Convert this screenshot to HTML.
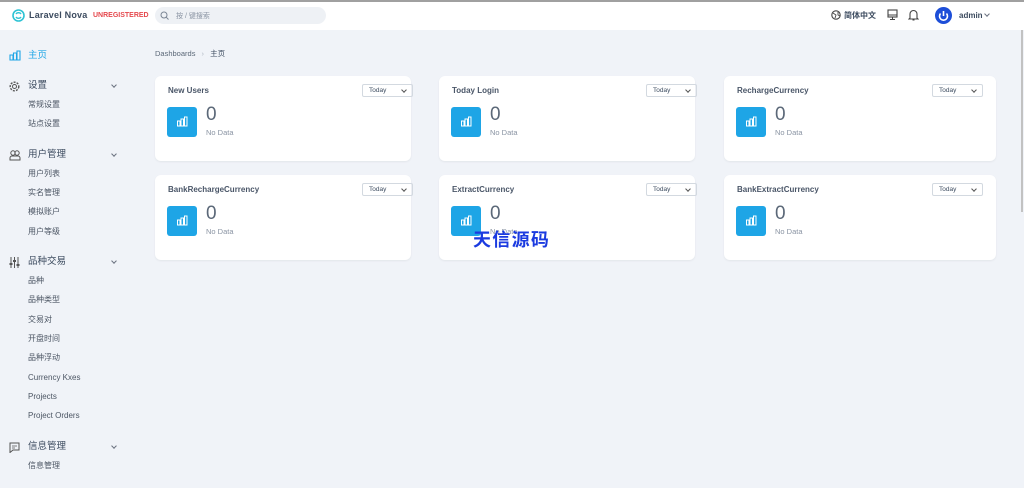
<!DOCTYPE html>
<html><head><meta charset="utf-8"><style>
*{box-sizing:border-box;margin:0;padding:0}
body{width:1024px;height:488px;overflow:hidden;background:#f0f3f8;font-family:"Liberation Sans","Noto Sans CJK SC",sans-serif;position:relative;color:#3c4b5f}
.top{position:absolute;left:0;top:0;width:1024px;height:2px;background:#a0a0a0}
.hdr{position:absolute;left:0;top:2px;width:1024px;height:28px;background:#fff}
.abs{position:absolute;white-space:nowrap}
.s{font-size:8px;color:#4b5563;line-height:1}
.sec{font-size:9.5px;color:#3c4b5f;line-height:1}
.card{position:absolute;background:#fff;border-radius:6px;box-shadow:0 1px 2px rgba(0,0,0,.06)}
.card .t{position:absolute;left:13px;top:10px;font-size:8px;font-weight:bold;color:#4a5668}
.card .sel{position:absolute;top:8px;width:51px;height:13px;border:1px solid #d3d9e0;border-radius:2px;font-size:6.5px;color:#3c4b5f;padding:2px 0 0 6px}
.card .sel:after{content:"";position:absolute;right:6px;top:3px;width:3px;height:3px;border-right:1px solid #555;border-bottom:1px solid #555;transform:rotate(45deg)}
.card .ic{position:absolute;left:12px;top:31px;width:30px;height:30px;background:#1ea5e6;border-radius:3px}
.card .n{position:absolute;left:51px;top:28px;font-size:19px;color:#5b6878}
.card .nd{position:absolute;left:51px;top:52px;font-size:7.5px;color:#8a94a3}
.chev{position:absolute;width:4px;height:4px;border-right:1px solid #6b7280;border-bottom:1px solid #6b7280;transform:rotate(45deg)}
</style></head><body>
<div class="top"></div>
<div class="hdr"></div>
<svg class="abs" style="left:12px;top:9px" width="13" height="13" viewBox="0 0 13 13"><circle cx="6.5" cy="6.5" r="5.5" fill="none" stroke="#2dc3d4" stroke-width="1.6"/><path d="M4 5a3 3 0 0 1 5 0M9 8a3 3 0 0 1-5 0" fill="none" stroke="#2dc3d4" stroke-width="1.4"/></svg>
<div class="abs" style="left:29px;top:10px;font-size:9px;font-weight:bold;color:#3c4b5f;letter-spacing:.2px">Laravel Nova</div>
<div class="abs" style="left:93px;top:12px;font-size:7px;font-weight:bold;color:#e5484d">UNREGISTERED</div>
<div class="abs" style="left:155px;top:7px;width:171px;height:17px;background:#eef1f5;border-radius:9px"></div>
<svg class="abs" style="left:160px;top:11px" width="9" height="9"><circle cx="4" cy="4" r="3" fill="none" stroke="#7a8594" stroke-width="1"/><path d="M6.2 6.2 8.5 8.5" stroke="#7a8594"/></svg>
<div class="abs" style="left:176px;top:11px;font-size:7px;color:#8a94a3">按 / 键搜索</div>
<svg class="abs" style="left:831px;top:10px" width="10" height="10"><circle cx="5" cy="5" r="4.2" fill="none" stroke="#444" stroke-width="1.1"/><path d="M2 3l3 2-1 3M7 2l0 3 2 1" fill="none" stroke="#444" stroke-width=".9"/></svg>
<div class="abs" style="left:844px;top:10px;font-size:8px;font-weight:bold;color:#3c4b5f">简体中文</div>
<svg class="abs" style="left:887px;top:9px" width="11" height="11"><rect x="1" y="1" width="9" height="7" fill="none" stroke="#444" stroke-width="1.1"/><path d="M1 6h9M5.5 8v2M3 10.5h5" stroke="#444"/></svg>
<svg class="abs" style="left:908px;top:9px" width="11" height="12"><path d="M2 9V5a3.5 3.5 0 0 1 7 0v4l1 1H1zM4.5 11h2" fill="none" stroke="#444" stroke-width="1.1"/></svg>
<div class="abs" style="left:935px;top:7px;width:17px;height:17px;border-radius:50%;background:#1d4ed8"></div>
<svg class="abs" style="left:935px;top:7px" width="17" height="17"><path d="M5.5 6.5a4 4 0 1 0 6 0" fill="none" stroke="#fff" stroke-width="1.6"/><path d="M8.5 4v5" stroke="#fff" stroke-width="1.6"/></svg>
<div class="abs" style="left:959px;top:11px;font-size:8px;font-weight:bold;color:#3c4b5f">admin</div>
<div class="chev" style="left:985px;top:12px"></div>
<div class="abs" style="left:1021px;top:30px;width:2px;height:182px;background:#c2c2c2"></div>

<svg class="abs" style="left:9px;top:50px" width="12" height="11"><path d="M1 5h3v5H1zM4.5 3h3v7h-3zM8 1h3v9H8z" fill="none" stroke="#1ea5e6" stroke-width="1.1"/></svg>
<div class="abs sec" style="left:28px;top:51px;color:#1ea5e6">主页</div>
<svg class="abs" style="left:9px;top:81px" width="11" height="11"><circle cx="5.5" cy="5.5" r="2" fill="none" stroke="#555"/><circle cx="5.5" cy="5.5" r="4.3" fill="none" stroke="#555" stroke-dasharray="2 1.2" stroke-width="1.4"/></svg>
<div class="abs sec" style="left:28px;top:81px">设置</div><div class="chev" style="left:112px;top:83px"></div>
<div class="abs s" style="left:28px;top:101px">常规设置</div>
<div class="abs s" style="left:28px;top:120px">站点设置</div>
<svg class="abs" style="left:9px;top:150px" width="12" height="11"><circle cx="4" cy="3" r="2.2" fill="none" stroke="#555"/><circle cx="8" cy="3" r="2.2" fill="none" stroke="#555"/><path d="M1 10V8a2 2 0 0 1 2-2h6a2 2 0 0 1 2 2v2z" fill="none" stroke="#555"/></svg>
<div class="abs sec" style="left:28px;top:150px">用户管理</div><div class="chev" style="left:112px;top:152px"></div>
<div class="abs s" style="left:28px;top:170px">用户列表</div>
<div class="abs s" style="left:28px;top:189px">实名管理</div>
<div class="abs s" style="left:28px;top:208px">模拟账户</div>
<div class="abs s" style="left:28px;top:228px">用户等级</div>
<svg class="abs" style="left:9px;top:257px" width="11" height="11"><path d="M2 0v11M5.5 0v11M9 0v11" stroke="#555"/><rect x="0.5" y="6" width="3" height="2" fill="#555"/><rect x="4" y="3" width="3" height="2" fill="#555"/><rect x="7.5" y="7" width="3" height="2" fill="#555"/></svg>
<div class="abs sec" style="left:28px;top:257px">品种交易</div><div class="chev" style="left:112px;top:259px"></div>
<div class="abs s" style="left:28px;top:277px">品种</div>
<div class="abs s" style="left:28px;top:296px">品种类型</div>
<div class="abs s" style="left:28px;top:316px">交易对</div>
<div class="abs s" style="left:28px;top:335px">开盘时间</div>
<div class="abs s" style="left:28px;top:354px">品种浮动</div>
<div class="abs s" style="left:28px;top:374px">Currency Kxes</div>
<div class="abs s" style="left:28px;top:393px">Projects</div>
<div class="abs s" style="left:28px;top:412px">Project Orders</div>
<svg class="abs" style="left:9px;top:442px" width="11" height="11"><path d="M1 1h9v7H4l-3 2.5z" fill="none" stroke="#555"/><path d="M3 4h5M3 6h3" stroke="#555" stroke-width=".8"/></svg>
<div class="abs sec" style="left:28px;top:442px">信息管理</div><div class="chev" style="left:112px;top:444px"></div>
<div class="abs s" style="left:28px;top:462px">信息管理</div>

<div class="abs" style="left:155px;top:48px;font-size:7.5px;color:#5b6878">Dashboards <span style="color:#b0b8c3;margin:0 4px">›</span> <span style="color:#3c4b5f">主页</span></div>

<div class="card" style="left:155px;top:76px;width:256px;height:85px"><div class="t">New Users</div><div class="sel" style="left:207px">Today</div><div class="ic"></div><div class="n">0</div><div class="nd">No Data</div></div>
<div class="card" style="left:439px;top:76px;width:256px;height:85px"><div class="t">Today Login</div><div class="sel" style="left:207px">Today</div><div class="ic"></div><div class="n">0</div><div class="nd">No Data</div></div>
<div class="card" style="left:724px;top:76px;width:272px;height:85px"><div class="t">RechargeCurrency</div><div class="sel" style="left:208px">Today</div><div class="ic"></div><div class="n">0</div><div class="nd">No Data</div></div>
<div class="card" style="left:155px;top:175px;width:256px;height:85px"><div class="t">BankRechargeCurrency</div><div class="sel" style="left:207px">Today</div><div class="ic"></div><div class="n">0</div><div class="nd">No Data</div></div>
<div class="card" style="left:439px;top:175px;width:256px;height:85px"><div class="t">ExtractCurrency</div><div class="sel" style="left:207px">Today</div><div class="ic"></div><div class="n">0</div><div class="nd">No Data</div></div>
<div class="card" style="left:724px;top:175px;width:272px;height:85px"><div class="t">BankExtractCurrency</div><div class="sel" style="left:208px">Today</div><div class="ic"></div><div class="n">0</div><div class="nd">No Data</div></div>

<svg class="abs" style="left:176px;top:115px" width="12" height="12"><path d="M1.5 6h2.5v5H1.5zM5 4h2.5v7H5zM8.5 2H11v9H8.5z" fill="none" stroke="#fff" stroke-width="1"/></svg>
<svg class="abs" style="left:460px;top:115px" width="12" height="12"><path d="M1.5 6h2.5v5H1.5zM5 4h2.5v7H5zM8.5 2H11v9H8.5z" fill="none" stroke="#fff" stroke-width="1"/></svg>
<svg class="abs" style="left:745px;top:115px" width="12" height="12"><path d="M1.5 6h2.5v5H1.5zM5 4h2.5v7H5zM8.5 2H11v9H8.5z" fill="none" stroke="#fff" stroke-width="1"/></svg>
<svg class="abs" style="left:176px;top:214px" width="12" height="12"><path d="M1.5 6h2.5v5H1.5zM5 4h2.5v7H5zM8.5 2H11v9H8.5z" fill="none" stroke="#fff" stroke-width="1"/></svg>
<svg class="abs" style="left:460px;top:214px" width="12" height="12"><path d="M1.5 6h2.5v5H1.5zM5 4h2.5v7H5zM8.5 2H11v9H8.5z" fill="none" stroke="#fff" stroke-width="1"/></svg>
<svg class="abs" style="left:745px;top:214px" width="12" height="12"><path d="M1.5 6h2.5v5H1.5zM5 4h2.5v7H5zM8.5 2H11v9H8.5z" fill="none" stroke="#fff" stroke-width="1"/></svg>

<div class="abs" style="left:473px;top:226px;font-size:18px;font-weight:bold;color:#1b3be0;letter-spacing:1.3px">天信源码</div>
</body></html>
